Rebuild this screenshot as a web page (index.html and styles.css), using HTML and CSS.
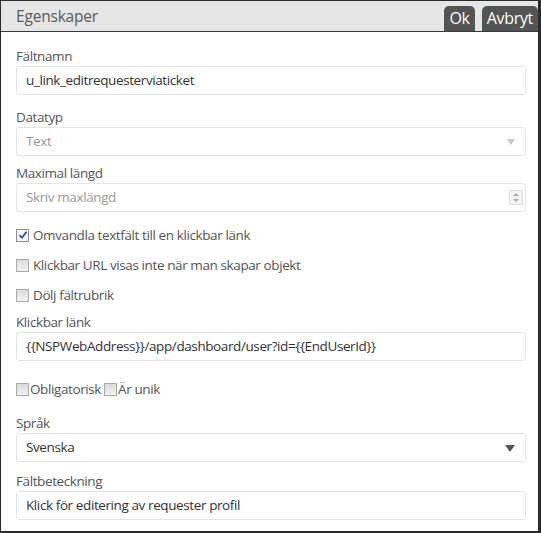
FILE: index.html
```html
<!DOCTYPE html>
<html>
<head>
<meta charset="utf-8">
<link rel="stylesheet" href="styles.css">
</head>
<body>
<div class="dialog">
  <div class="header">
    <div class="title">Egenskaper</div>
    <div class="actions">
      <button class="btn">Ok</button>
      <button class="btn">Avbryt</button>
    </div>
  </div>
  <div class="body">
    <div class="field first">
      <div class="label">Fältnamn</div>
      <div class="input">u_link_editrequesterviaticket</div>
    </div>
    <div class="field second">
      <div class="label">Datatyp</div>
      <div class="input disabled select">Text<span class="caret light"></span></div>
    </div>
    <div class="field third">
      <div class="label">Maximal längd</div>
      <div class="input placeholder spin">Skriv maxlängd
        <span class="spinner"><span class="up"></span><span class="down"></span></span>
      </div>
    </div>
    <div class="check-row first-check"><span class="cb checked"><svg width="10" height="10" viewBox="0 0 10 10"><path d="M1.5 5.2 L4 7.8 L8.6 1.8" fill="none" stroke="#2a4f8f" stroke-width="1.7"/></svg></span>Omvandla textfält till en klickbar länk</div>
    <div class="check-row"><span class="cb"></span>Klickbar URL visas inte när man skapar objekt</div>
    <div class="check-row"><span class="cb"></span>Dölj fältrubrik</div>
    <div class="field link">
      <div class="label">Klickbar länk</div>
      <div class="input">{{NSPWebAddress}}/app/dashboard/user?id={{EndUserId}}</div>
    </div>
    <div class="inline-checks"><span class="cb tight"></span>Obligatorisk <span class="cb tight"></span>Är unik</div>
    <div class="field lang">
      <div class="label">Språk</div>
      <div class="input select">Svenska<span class="caret"></span></div>
    </div>
    <div class="field">
      <div class="label">Fältbeteckning</div>
      <div class="input">Klick för editering av requester profil</div>
    </div>
  </div>
</div>
</body>
</html>
```
FILE: styles.css
```css
* { box-sizing: border-box; }
html, body { margin: 0; padding: 0; background: #fff; }
body { font-family: "Open Sans", "Noto Sans", sans-serif; color: #555; }
.dialog {
  width: 541px;
  height: 533px;
  border: 1px solid #2b2b2b;
  border-right-width: 3px;
  border-bottom-width: 2px;
  background: #fff;
}
.header {
  height: 31px;
  background: #e6e6e6;
  border-bottom: 1px solid #3a3a3a;
  display: flex;
  justify-content: space-between;
  align-items: flex-end;
  padding: 0 0 0 15px;
}
.title {
  align-self: center;
  font-size: 15.5px;
  color: #5a5a5a;
  letter-spacing: -0.2px;
}
.actions { display: flex; gap: 7px; }
.btn {
  font-family: inherit;
  border: none;
  background: #545454;
  color: #fff;
  font-size: 16px;
  height: 25px;
  padding: 0 5px;
  border-radius: 5px 5px 0 0;
  line-height: 25px;
  letter-spacing: -0.3px;
}
.body { padding: 0 12px 0 15px; }
.field { margin-top: 10px; }
.field.first { margin-top: 15px; }
.field.second { margin-top: 13px; }
.field.third { margin-top: 8px; }
.label { font-size: 13.5px; color: #555; line-height: 19px; letter-spacing: -0.4px; }
.input {
  position: relative;
  height: 29px;
  border: 1px solid #e4e4e4;
  border-radius: 3px;
  padding: 0 9px;
  font-size: 13.5px;
  line-height: 27px;
  color: #333;
  letter-spacing: -0.4px;
}
.input.disabled, .input.placeholder { color: #999; }
.caret {
  position: absolute;
  right: 10px;
  top: 11px;
  width: 0; height: 0;
  border-left: 5px solid transparent;
  border-right: 5px solid transparent;
  border-top: 7px solid #555;
}
.caret.light { border-top-color: #c8c8c8; border-left-width: 4px; border-right-width: 4px; border-top-width: 6px; }
.spinner {
  position: absolute;
  right: 2px;
  top: 6px;
  width: 14px;
  height: 15px;
  border: 1px solid #ddd;
  background: #f4f4f4;
  display: flex;
  flex-direction: column;
  align-items: center;
  justify-content: space-around;
}
.spinner .up { width: 0; height: 0; border-left: 3px solid transparent; border-right: 3px solid transparent; border-bottom: 3px solid #aaa; }
.spinner .down { width: 0; height: 0; border-left: 3px solid transparent; border-right: 3px solid transparent; border-top: 3px solid #aaa; }
.check-row {
  display: flex;
  align-items: center;
  font-size: 13.5px;
  color: #555;
  height: 20px;
  margin-top: 10px;
  letter-spacing: -0.4px;
}
.check-row.first-check { margin-top: 13px; }
.cb {
  display: inline-flex;
  align-items: center;
  justify-content: center;
  width: 13px;
  height: 13px;
  border: 1px solid #a9a9a9;
  background: linear-gradient(#dcdcdc, #f2f2f2);
  margin-right: 4px;
  flex: none;
}
.cb.checked { background: #f4f6fa; border-color: #8f8f8f; }
.cb.tight { margin-right: 1px; }
.field.link { margin-top: 8px; }
.inline-checks {
  display: flex;
  align-items: center;
  margin-top: 18px;
  font-size: 13.5px;
  height: 20px;
  white-space: pre;
  letter-spacing: -0.4px;
}
.field.lang { margin-top: 15px; }
```
